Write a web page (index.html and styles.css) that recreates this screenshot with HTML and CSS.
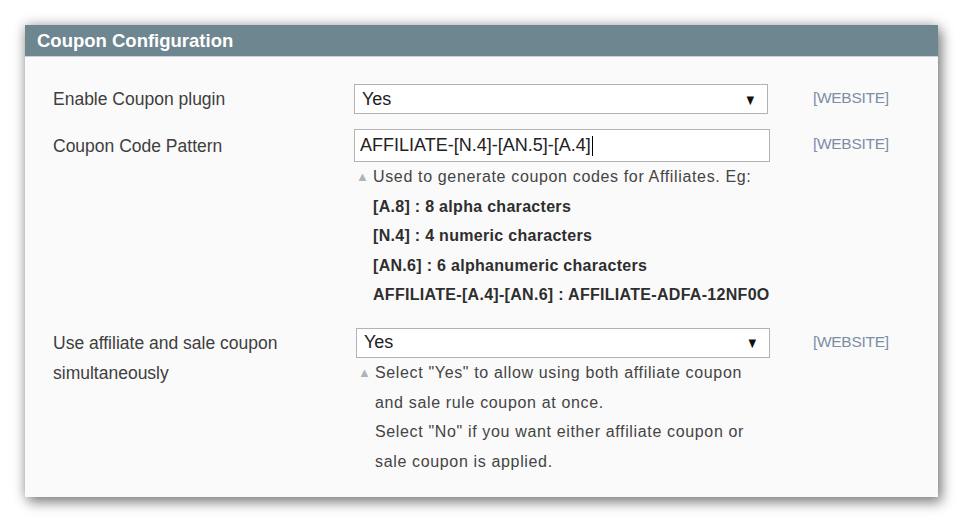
FILE: index.html
```html
<!DOCTYPE html>
<html>
<head>
<meta charset="utf-8">
<link rel="stylesheet" href="styles.css">
</head>
<body>
<div class="panel">
  <div class="panel-head">Coupon Configuration</div>
  <div class="panel-body">
    <div class="row row-1">
      <div class="label">Enable Coupon plugin</div>
      <div class="value">
        <div class="select"><span>Yes</span><span class="arrow">&#9660;</span></div>
      </div>
      <div class="scope">[WEBSITE]</div>
    </div>
    <div class="row row-2">
      <div class="label label-input">Coupon Code Pattern</div>
      <div class="value">
        <div class="input"><span>AFFILIATE-[N.4]-[AN.5]-[A.4]</span><span class="caret"></span></div>
        <div class="note">
          <p><span class="tri">&#9650;</span>Used to generate coupon codes for Affiliates. Eg:</p>
          <p class="b">[A.8] : 8 alpha characters</p>
          <p class="b">[N.4] : 4 numeric characters</p>
          <p class="b">[AN.6] : 6 alphanumeric characters</p>
          <p class="b">AFFILIATE-[A.4]-[AN.6] : AFFILIATE-ADFA-12NF0O</p>
        </div>
      </div>
      <div class="scope scope-input">[WEBSITE]</div>
    </div>
    <div class="row row-3">
      <div class="label">Use affiliate and sale coupon<br>simultaneously</div>
      <div class="value value-shift">
        <div class="select"><span>Yes</span><span class="arrow">&#9660;</span></div>
        <div class="note">
          <p><span class="tri">&#9650;</span>Select "Yes" to allow using both affiliate coupon</p>
          <p>and sale rule coupon at once.</p>
          <p>Select "No" if you want either affiliate coupon or</p>
          <p>sale coupon is applied.</p>
        </div>
      </div>
      <div class="scope">[WEBSITE]</div>
    </div>
  </div>
</div>
</body>
</html>
```

FILE: styles.css
```css
html, body {
  margin: 0;
  padding: 0;
  background: #ffffff;
}

html {
  height: 100%;
}

body {
  padding: 25px 0 26px 25px;
  font-family: "Liberation Sans", Arial, sans-serif;
}

.panel {
  width: 913px;
  height: 472px;
  background: #fafafa;
  box-shadow: 0 0 12px rgba(0, 0, 0, 0.3), 4px 6px 12px rgba(0, 0, 0, 0.38);
  display: flex;
  flex-direction: column;
}

.panel-head {
  height: 31px;
  line-height: 31px;
  background: #6e868f;
  border-bottom: 1px solid #c9d1d4;
  color: #ffffff;
  font-weight: bold;
  font-size: 18.5px;
  padding-left: 12px;
}

.panel-body {
  padding: 27px 0 0 28px;
  display: flex;
  flex-direction: column;
}

.row {
  display: grid;
  grid-template-columns: 301px 416px auto;
  align-items: start;
}

.row-2 {
  margin-top: 15px;
}

.row-3 {
  margin-top: 18px;
}

.label {
  font-size: 17.5px;
  line-height: 30px;
  color: #3e3e3e;
}

.label-input {
  padding-top: 2px;
}

.value {
  display: flex;
  flex-direction: column;
}

.value-shift {
  padding-left: 2px;
}

.select {
  height: 28px;
  border: 1px solid #b3b3b3;
  background: #ffffff;
  display: flex;
  align-items: center;
  justify-content: space-between;
  padding: 0 9px 0 7px;
  font-size: 18px;
  color: #222;
  width: 396px;
}

.arrow {
  font-size: 15px;
  color: #111;
  transform: scaleX(0.85);
}

.input {
  height: 31px;
  border: 1px solid #b3b3b3;
  background: #ffffff;
  display: flex;
  align-items: center;
  padding-left: 5px;
  font-size: 18px;
  color: #222;
}

.caret {
  display: inline-block;
  width: 1px;
  height: 20px;
  background: #000;
  margin-left: 1px;
}

.note {
  font-size: 16px;
  letter-spacing: 0.65px;
  color: #444;
}

.note p {
  margin: 0;
  line-height: 29.6px;
  padding-left: 19px;
  position: relative;
}

.note p.b {
  font-weight: bold;
  color: #2e2e2e;
  letter-spacing: 0.3px;
}

.tri {
  position: absolute;
  left: 2px;
  top: 0;
  font-size: 13px;
  letter-spacing: 0;
  color: #aab4b9;
}

.scope {
  padding-left: 43px;
  font-size: 15.5px;
  line-height: 30px;
  color: #7b8ea6;
  letter-spacing: -0.3px;
  margin-top: -1px;
}

.scope-input {
  margin-top: 0;
}
```
